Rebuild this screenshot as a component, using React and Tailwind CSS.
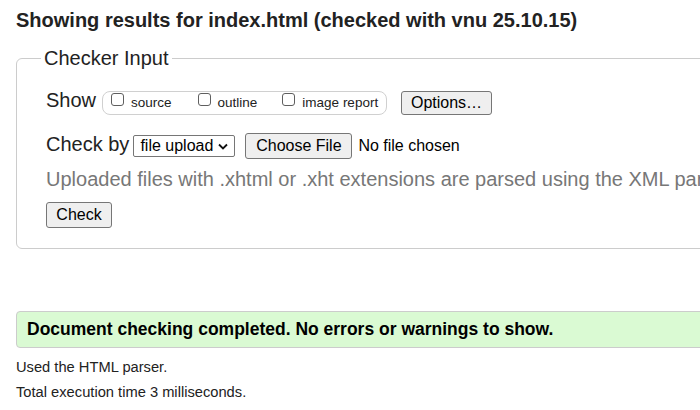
import React from 'react';

function Box({ label }) {
  return (
    <span className="flex items-start">
      <span className="mt-[1px] w-[13px] h-[13px] border border-[#5f5f5f] rounded-[3px] bg-white shrink-0" />
      <span className="ml-[7px] text-[13.5px] leading-[15px] mt-[3px] whitespace-nowrap">{label}</span>
    </span>
  );
}

function Btn({ children, className = '' }) {
  return (
    <button
      type="button"
      className={`bg-[#efefef] border border-[#767676] rounded-[3px] px-[10px] text-[16px] text-black whitespace-nowrap flex items-center justify-center shrink-0 ${className}`}
    >
      {children}
    </button>
  );
}

export default function App() {
  return (
    <div className="w-[700px] h-[410px] overflow-hidden bg-white text-[#222] font-['Liberation_Sans',Arial,sans-serif]">
      <div className="w-[1000px] px-[16px]">
        {/* heading */}
        <h2 className="pt-[8px] text-[20px] leading-[24px] font-bold whitespace-nowrap">
          Showing results for index.html (checked with vnu 25.10.15)
        </h2>

        {/* checker input form */}
        <fieldset className="mt-[14px] border border-[#cccccc] rounded-[6px] pl-[29px] pt-[21px] pb-[20px]">
          <legend className="ml-[-5px] px-[3px] text-[20px] leading-[24px]">Checker Input</legend>

          <div className="flex items-start h-[24px]">
            <span className="text-[20px] leading-[19px]">Show</span>
            <div className="ml-[6px] h-[24px] w-[285px] border border-[#d0d0d0] rounded-[8px] flex items-start pl-[8px]">
              <Box label="source" />
              <span className="w-[26px]" />
              <Box label="outline" />
              <span className="w-[25px]" />
              <Box label="image report" />
            </div>
            <Btn className="ml-[14px] h-[24px] w-[91px]">Options…</Btn>
          </div>

          <div className="flex items-center mt-[18px] h-[26px]">
            <span className="self-start text-[20px] leading-[23px] whitespace-nowrap">Check by</span>
            <div className="ml-[4px] h-[22px] w-[102px] border border-[#767676] rounded-[2px] bg-white flex items-center pl-[6px] pr-[6px] text-[16px] text-black shrink-0">
              <span className="flex-1 whitespace-nowrap">file upload</span>
              <svg width="10" height="7" viewBox="0 0 10 7" className="mt-[1px]">
                <path d="M1 1.5 L5 5.5 L9 1.5" fill="none" stroke="#111" strokeWidth="1.8" />
              </svg>
            </div>
            <Btn className="ml-[10px] h-[26px] w-[107px]">Choose File</Btn>
            <span className="ml-[6px] text-[16px] text-black whitespace-nowrap">No file chosen</span>
          </div>

          <p className="mt-[8px] text-[20px] leading-[24px] text-[#777] whitespace-nowrap">
            Uploaded files with .xhtml or .xht extensions are parsed using the XML parser.
          </p>

          <Btn className="mt-[11px] h-[26px] w-[66px]">Check</Btn>
        </fieldset>

        {/* result */}
        <div className="mt-[62px] h-[37px] border border-[#cccccc] rounded-[4px] bg-[#dafad3] flex items-center pl-[10px]">
          <span className="text-[17.5px] font-bold text-black whitespace-nowrap">
            Document checking completed. No errors or warnings to show.
          </span>
        </div>

        <p className="mt-[9px] text-[14.7px] leading-[20px]">Used the HTML parser.</p>
        <p className="mt-[5px] text-[14.7px] leading-[20px]">Total execution time 3 milliseconds.</p>
      </div>
    </div>
  );
}
